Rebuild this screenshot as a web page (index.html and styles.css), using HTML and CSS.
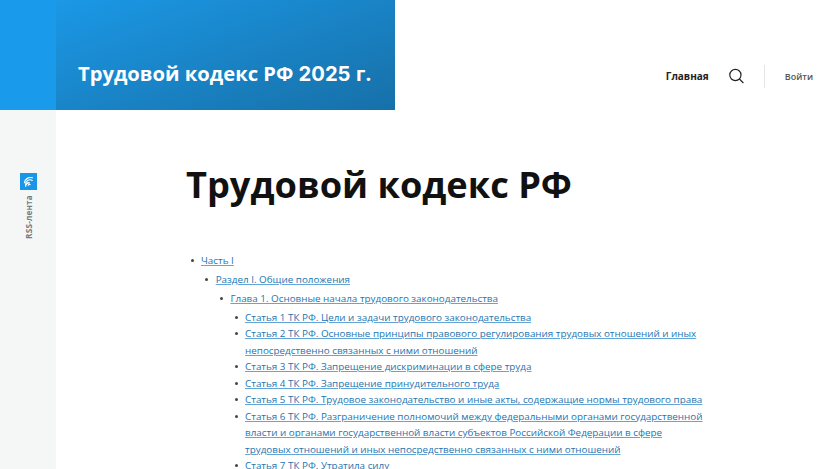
FILE: index.html
```html
<!DOCTYPE html>
<html lang="ru">
<head>
<meta charset="utf-8">
<title>Трудовой кодекс РФ</title>
<link rel="stylesheet" href="styles.css">
</head>
<body>
<div class="page">
  <aside class="rail">
    <div class="rail-top"></div>
    <a class="rss" href="#">
      <span class="rss-icon">
        <svg viewBox="0 0 17 17" width="17" height="17"><g fill="none" stroke="#fff" stroke-linecap="round"><path d="M4.4 9.6A6.2 6.2 0 0 1 12.4 4.8" stroke-width="1.2"/><path d="M5.6 11.4A4.4 4.4 0 0 1 12.2 7.4" stroke-width="1.2"/><path d="M5.6 13.2A3.4 3.4 0 0 1 9.4 9.8" stroke-width="1.3"/><path d="M8.2 12.2A1.4 1.4 0 0 1 10 11.6" stroke-width="1.2"/></g></svg>
      </span>
      <span class="rss-label">RSS-лента</span>
    </a>
  </aside>
  <div class="main">
    <header class="header">
      <div class="brand"><span>Трудовой кодекс РФ <span class="year">2025</span> г.</span></div>
      <nav class="nav">
        <a class="nav-home" href="#">Главная</a>
        <svg class="search" viewBox="0 0 16 16" width="16" height="16"><circle cx="6.4" cy="7" r="5.6" fill="none" stroke="#222" stroke-width="1.2"/><path d="M10.4 11L14.4 15" stroke="#222" stroke-width="1.2"/></svg>
        <span class="divider"></span>
        <a class="login" href="#">Войти</a>
      </nav>
    </header>
    <main class="content">
      <h1>Трудовой кодекс РФ</h1>
      <ul class="toc">
        <li><a href="#">Часть I</a>
          <ul><li><a href="#">Раздел I. Общие положения</a>
            <ul><li><a href="#">Глава 1. Основные начала трудового законодательства</a>
              <ul>
                <li><a href="#">Статья 1 ТК РФ. Цели и задачи трудового законодательства</a></li>
                <li><a href="#">Статья 2 ТК РФ. Основные принципы правового регулирования трудовых отношений и иных непосредственно связанных с ними отношений</a></li>
                <li><a href="#">Статья 3 ТК РФ. Запрещение дискриминации в сфере труда</a></li>
                <li><a href="#">Статья 4 ТК РФ. Запрещение принудительного труда</a></li>
                <li><a href="#">Статья 5 ТК РФ. Трудовое законодательство и иные акты, содержащие нормы трудового права</a></li>
                <li><a href="#">Статья 6 ТК РФ. Разграничение полномочий между федеральными органами государственной власти и органами государственной власти субъектов Российской Федерации в сфере трудовых отношений и иных непосредственно связанных с ними отношений</a></li>
                <li><a href="#">Статья 7 ТК РФ. Утратила силу</a></li>
              </ul>
            </li></ul>
          </li></ul>
        </li>
      </ul>
    </main>
  </div>
</div>
</body>
</html>
```
FILE: styles.css
```css
* { box-sizing: border-box; }
html, body { margin: 0; height: 469px; overflow: hidden; background: #fff; }
body { font-family: "Open Sans", "Noto Sans", sans-serif; color: #111; }
a { color: #2574b0; }
.page { display: flex; height: 469px; }
.rail { width: 56px; flex: none; background: #f5f7f7; display: flex; flex-direction: column; align-items: center; }
.rail-top { width: 100%; height: 110px; background: #1a9aea; flex: none; }
.rss { display: flex; flex-direction: column; align-items: center; margin-top: 63px; text-decoration: none; }
.rss-icon { width: 17px; height: 17px; background: #1a96e6; display: block; }
.rss-icon svg { display: block; }
.rss-label { writing-mode: vertical-rl; transform: rotate(180deg); font-size: 8.2px; font-weight: 700; color: #767c82; margin-top: 5px; letter-spacing: .2px; line-height: 11px; }
.main { flex: 1; min-width: 0; }
.header { display: flex; height: 110px; justify-content: space-between; }
.brand { width: 339px; height: 110px; background: linear-gradient(160deg, #1b98e6 0%, #1878b4 80%, #1670aa 100%); display: flex; align-items: flex-end; padding: 0 0 21px 22px; }
.brand > span { font-size: 20.2px; line-height: 30px; font-weight: 700; color: #fff; white-space: nowrap; }
.year { font-family: Inter, "Open Sans", sans-serif; font-weight: 700; }
.nav { display: flex; align-items: center; padding: 42px 22px 0 0; height: 110px; }
.nav-home { font-size: 10px; font-weight: 700; color: #222; text-decoration: none; }
.search { margin-left: 20px; }
.divider { width: 1px; height: 23px; background: #e3e5e8; margin-left: 19px; }
.login { font-size: 9px; font-weight: 600; color: #555; text-decoration: none; margin-left: 20px; }
.content { padding: 0 0 0 130px; width: 649px; }
h1 { margin: 49px 0 0; font-size: 36.2px; line-height: 50px; font-weight: 700; color: #111; }
.toc, .toc ul { list-style: none; margin: 0; padding: 0 0 0 14.7px; }
.toc { margin-top: 42.5px; padding-left: 15px; font-size: 9.85px; line-height: 16.5px; }
.toc li { position: relative; }
.toc li::before { content: ""; position: absolute; left: -10.5px; top: 7px; width: 3px; height: 3px; border-radius: 50%; background: #444; }
.toc a { text-decoration-color: #63a5d8; }
.toc > li > ul, .toc > li > ul > li > ul, .toc > li > ul > li > ul > li > ul { margin-top: 2.6px; }
```
